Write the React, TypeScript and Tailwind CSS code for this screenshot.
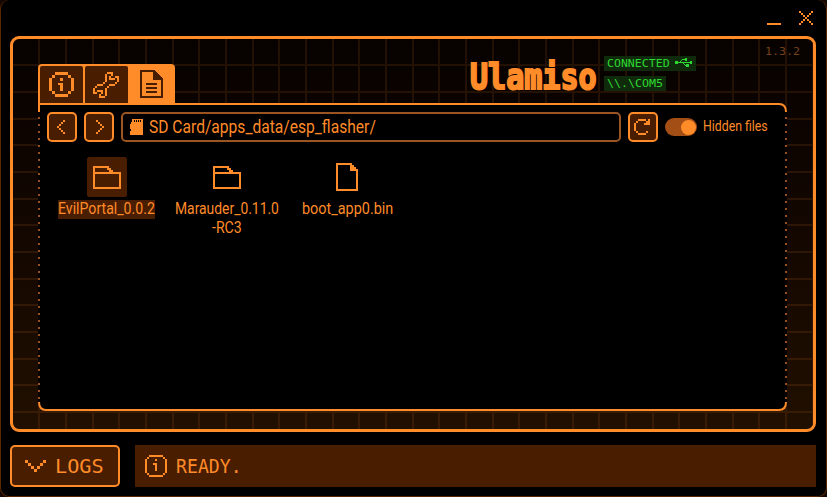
import React, { useLayoutEffect, useRef, useState } from "react";

const MONO = "font-['DejaVu_Sans_Mono','Liberation_Mono',monospace]";
const SANS = "font-['Roboto','Liberation_Sans',sans-serif]";

/** Condenses a single line of text to a given width. */
function Fit({ w, className = "", children }: { w: number; className?: string; children: string }) {
  const ref = useRef<HTMLSpanElement>(null);
  const [s, setS] = useState(1);
  useLayoutEffect(() => {
    if (ref.current) setS(w / ref.current.offsetWidth);
  }, [w]);
  return (
    <div className={`shrink-0 whitespace-nowrap ${className}`} style={{ width: w }}>
      <span ref={ref} className="inline-block origin-left" style={{ transform: `scaleX(${s})` }}>
        {children}
      </span>
    </div>
  );
}

/** One-bit icon, '#' marks a filled cell. */
function Pixels({ rows, w, h, className = "" }: { rows: string[]; w: number; h: number; className?: string }) {
  return (
    <svg
      width={w}
      height={h}
      viewBox={`0 0 ${rows[0].length} ${rows.length}`}
      preserveAspectRatio="none"
      shapeRendering="crispEdges"
      fill="currentColor"
      className={`block shrink-0 ${className}`}
    >
      {rows.flatMap((r, y) =>
        r.split("").map((c, x) => (c === "#" ? <rect key={`${x}-${y}`} x={x} y={y} width="1" height="1" /> : null))
      )}
    </svg>
  );
}

const INFO_FINE = [
  "..#######..",
  ".#.......#.",
  "#....#....#",
  "#.........#",
  "#...##....#",
  "#....#....#",
  "#....#....#",
  "#....#....#",
  "#.........#",
  ".#.......#.",
  "..#######..",
];
const WRENCH = [
  ".......###...",
  "......#..#...",
  "......#.#..##",
  "......#.###.#",
  "......#.....#",
  ".....#.....#.",
  "..###...###..",
  ".#.....#.....",
  "#.....#......",
  "#.###.#......",
  "##..#.#......",
  "...#..#......",
  "...###.......",
];
const REFRESH = ["..####.#", ".#....##", "#....###", "#.......", "#.......", "#.......", ".#....#.", "..####.."];
const LEFT = ["...#", "..#.", ".#..", "#...", ".#..", "..#.", "...#"];
const RIGHT = ["#...", ".#..", "..#.", "...#", "..#.", ".#..", "#..."];
const DOWN = ["#.....#", ".#...#.", "..#.#..", "...#..."];
const CLOSE = ["#.....#", ".#...#.", "..#.#..", "...#...", "..#.#..", ".#...#.", "#.....#"];

const Info = () => (
  <svg width="25" height="25" shapeRendering="crispEdges" fill="currentColor">
    <path d="M6 0h13v3H6zM6 22h13v3H6zM0 6h3v13H0zM22 6h3v13h-3zM3 3h3v3H3zM19 3h3v3h-3zM3 19h3v3H3zM19 19h3v3h-3z" />
    <path d="M11 6h3v3h-3zM9 11h5v8h-3v-6H9z" />
  </svg>
);

const Folder = () => (
  <svg width="28" height="23" shapeRendering="crispEdges" fill="currentColor">
    <path d="M0 0h16v2h2v2h2v2h8v17H0zM2 2v4h14V4h-2V2zM2 8v13h24V8z" fillRule="evenodd" />
  </svg>
);

const FileIcon = () => (
  <svg width="22" height="28" shapeRendering="crispEdges" fill="currentColor">
    <path d="M0 0h16v2h2v2h2v2h2v22H0zM2 2v24h18V8h-6V2z" fillRule="evenodd" />
  </svg>
);

const Doc = () => (
  <svg width="23" height="28" shapeRendering="crispEdges" fill="currentColor">
    <path d="M0 0h15v1h1v1h1v1h1v1h1v1h1v1h1v1h1v1h1v20H0zM2 2v24h19V10h-8V2z" fillRule="evenodd" />
    <path d="M6 13h11v2H6zM6 17h11v2H6zM6 21h11v2H6z" />
  </svg>
);

const Grid = () => (
  <svg className="absolute inset-0" width="800" height="390" shapeRendering="crispEdges">
    <defs>
      <linearGradient id="lines" gradientUnits="userSpaceOnUse" x1="0" y1="0" x2="0" y2="390">
        <stop offset="0" stopColor="#211003" />
        <stop offset="1" stopColor="#3a1c06" />
      </linearGradient>
    </defs>
    <g fill="url(#lines)">
      {Array.from({ length: 30 }, (_, i) => (
        <rect key={i} x={Math.round(11.67 + 26.667 * (i + 1)) - 13} y="0" width="2" height="390" />
      ))}
      {Array.from({ length: 14 }, (_, i) => (
        <rect key={i} x="0" y={Math.round(37.67 + 26.667 * (i + 1)) - 39} width="800" height="2" />
      ))}
    </g>
  </svg>
);

const Frame = () => (
  <svg className="absolute inset-0 pointer-events-none" width="749" height="308" fill="none" stroke="#ff8b29" strokeWidth="2">
    <path d="M1 9V1H741Q748 1 748 9M748 299Q748 307 741 307H8Q1 307 1 299" />
    <path d="M1 14V298M748 14V298" stroke="#985020" strokeDasharray="2 5" />
  </svg>
);

const btn = "flex items-center justify-center size-[30px] rounded-[5px] border-2 border-[#ff8b29] bg-[#491d00] shrink-0";

export default function App() {
  return (
    <div className={`h-[497px] w-[827px] bg-[#150800] text-[#ff8b29] ${SANS}`}>
      <div className="h-full w-full rounded-[9px] border border-t-0 border-[#5a2800] bg-black flex flex-col pl-[9px] pr-[10px]">
        <div className="flex h-9 shrink-0 justify-end gap-[18px] pr-[3px] pt-[11px]">
          <div className="mt-3 h-0.5 w-3.5 bg-[#ff8b29]" />
          <Pixels rows={CLOSE} w={14} h={14} />
        </div>

        <div className="relative h-[396px] shrink-0 overflow-hidden rounded-[9px] border-[3px] border-[#ff8b29] bg-gradient-to-b from-[#070200] to-[#211000]">
          <Grid />
          <div className="relative flex h-16 pl-[25px]">
            <div className="mt-[25px] flex h-[41px] w-[137px] shrink-0 gap-0.5 rounded-t-[4px] bg-[#ff8b29] pl-0.5 pt-0.5">
              <div className="flex h-[37px] w-[43px] items-center justify-center rounded-t-[2px] bg-[#491d00]">
                <Info />
              </div>
              <div className="flex h-[37px] w-[43px] items-center justify-center rounded-t-[2px] bg-[#491d00]">
                <Pixels rows={WRENCH} w={26} h={26} className="mr-px" />
              </div>
              <div className="flex w-[43px] justify-center pt-1 text-[#491d00]">
                <Doc />
              </div>
            </div>
            <Fit w={127} className={`ml-[295px] mr-px mt-[12px] text-[35px] font-bold leading-[52px] [-webkit-text-stroke:2px_#ff8b29] ${MONO}`}>
              Ulamiso
            </Fit>
            <div className={`ml-[6px] mt-[17px] flex w-[92px] flex-col items-start gap-[5px] text-[11px] leading-[15px] text-[#2ed832] ${MONO}`}>
              <div className="flex h-[15px] w-[92px] items-center bg-[#102b0b] pl-[3px]">
                <Fit w={63} className="leading-4">CONNECTED</Fit>
                <svg width="18" height="10" className="ml-[5px] -mt-0.5" fill="currentColor" shapeRendering="crispEdges">
                  <path d="M1 4h16v1H1zM0 3h3v3H0zM15 3h2v3h-2zM5 3h1v1H5zM6 2h1v1H6zM7 1h3v1H7zM10 0h2v3h-2zM8 5h1v1H8zM9 6h1v1H9zM10 7h1v1h-1zM11 6h3v3h-3z" />
                </svg>
              </div>
              <div className="h-[15px] w-[62px] bg-[#102b0b] pl-[3px]">
                <Fit w={56} className="leading-4">{"\\\\.\\COM5"}</Fit>
              </div>
            </div>
            <Fit w={35} className={`ml-[69px] mt-[5px] text-[11px] leading-[15px] text-[#74411b] ${MONO}`}>
              1.3.2
            </Fit>
          </div>

          <div className="relative ml-[25px] h-[308px] w-[749px] rounded-b-[8px] rounded-tr-[8px] bg-black">
            <Frame />
            <div className="flex items-center pl-[9px] pt-[9px]">
              <div className={btn}>
                <Pixels rows={LEFT} w={8} h={14} className="mr-0.5" />
              </div>
              <div className={`${btn} ml-[7px]`}>
                <Pixels rows={RIGHT} w={8} h={14} className="ml-0.5" />
              </div>
              <div className="ml-[7px] flex h-[30px] w-[500px] items-center rounded-[5px] border-2 border-[#9b5522] pl-[7px]">
                <svg width="13" height="16" fill="currentColor" shapeRendering="crispEdges">
                  <path d="M2 0h11v16H0v-4h1v-2H0V5h1V3h1zM4 1v2h1V1zM6 1v2h1V1zM8 1v2h1V1zM10 1v2h1V1z" fillRule="evenodd" />
                </svg>
                <Fit w={227} className="ml-[6px] text-[18px] leading-6">SD Card/apps_data/esp_flasher/</Fit>
              </div>
              <div className={`${btn} ml-[7px]`}>
                <Pixels rows={REFRESH} w={16} h={16} className="mr-0.5" />
              </div>
              <div className="ml-[7px] flex h-[18px] w-8 items-center justify-end rounded-full bg-[#a34e14] pr-[1.5px]">
                <div className="size-[15px] rounded-full bg-[#ff8b29]" />
              </div>
              <Fit w={65} className="-mt-0.5 ml-[6px] text-[14px] leading-5">Hidden files</Fit>
            </div>

            <div className="flex pl-[9px] pt-[15px] text-[16px] leading-[17px]">
              <div className="flex w-[120px] flex-col items-center">
                <div className="flex size-10 items-center justify-center rounded-[2px] bg-[#491d00]">
                  <Folder />
                </div>
                <Fit w={97} className="mr-px mt-[3px] h-[19px] bg-[#491d00]">EvilPortal_0.0.2</Fit>
              </div>
              <div className="flex w-[120px] flex-col items-center">
                <div className="flex size-10 items-center justify-center">
                  <Folder />
                </div>
                <Fit w={104} className="mt-[3px] h-[19px]">Marauder_0.11.0</Fit>
                <Fit w={30} className="h-[19px]">-RC3</Fit>
              </div>
              <div className="flex w-[120px] flex-col items-center">
                <div className="flex size-10 items-center justify-center">
                  <FileIcon />
                </div>
                <Fit w={91} className="mt-[3px] h-[19px]">boot_app0.bin</Fit>
              </div>
            </div>
          </div>
        </div>

        <div className={`mt-[13px] flex h-[42px] shrink-0 gap-[15px] text-[19px] leading-[28px] ${MONO}`}>
          <div className="flex w-[110px] items-center rounded-[5px] border-2 border-[#ff8b29] bg-[#491d00] pl-[13px]">
            <Pixels rows={DOWN} w={21} h={12} />
            <Fit w={49} className="ml-[9px]">LOGS</Fit>
          </div>
          <div className="flex flex-1 items-center bg-[#491d00] pl-[10px]">
            <Pixels rows={INFO_FINE} w={22} h={22} />
            <Fit w={66} className="ml-[9px]">READY.</Fit>
          </div>
        </div>
      </div>
    </div>
  );
}
